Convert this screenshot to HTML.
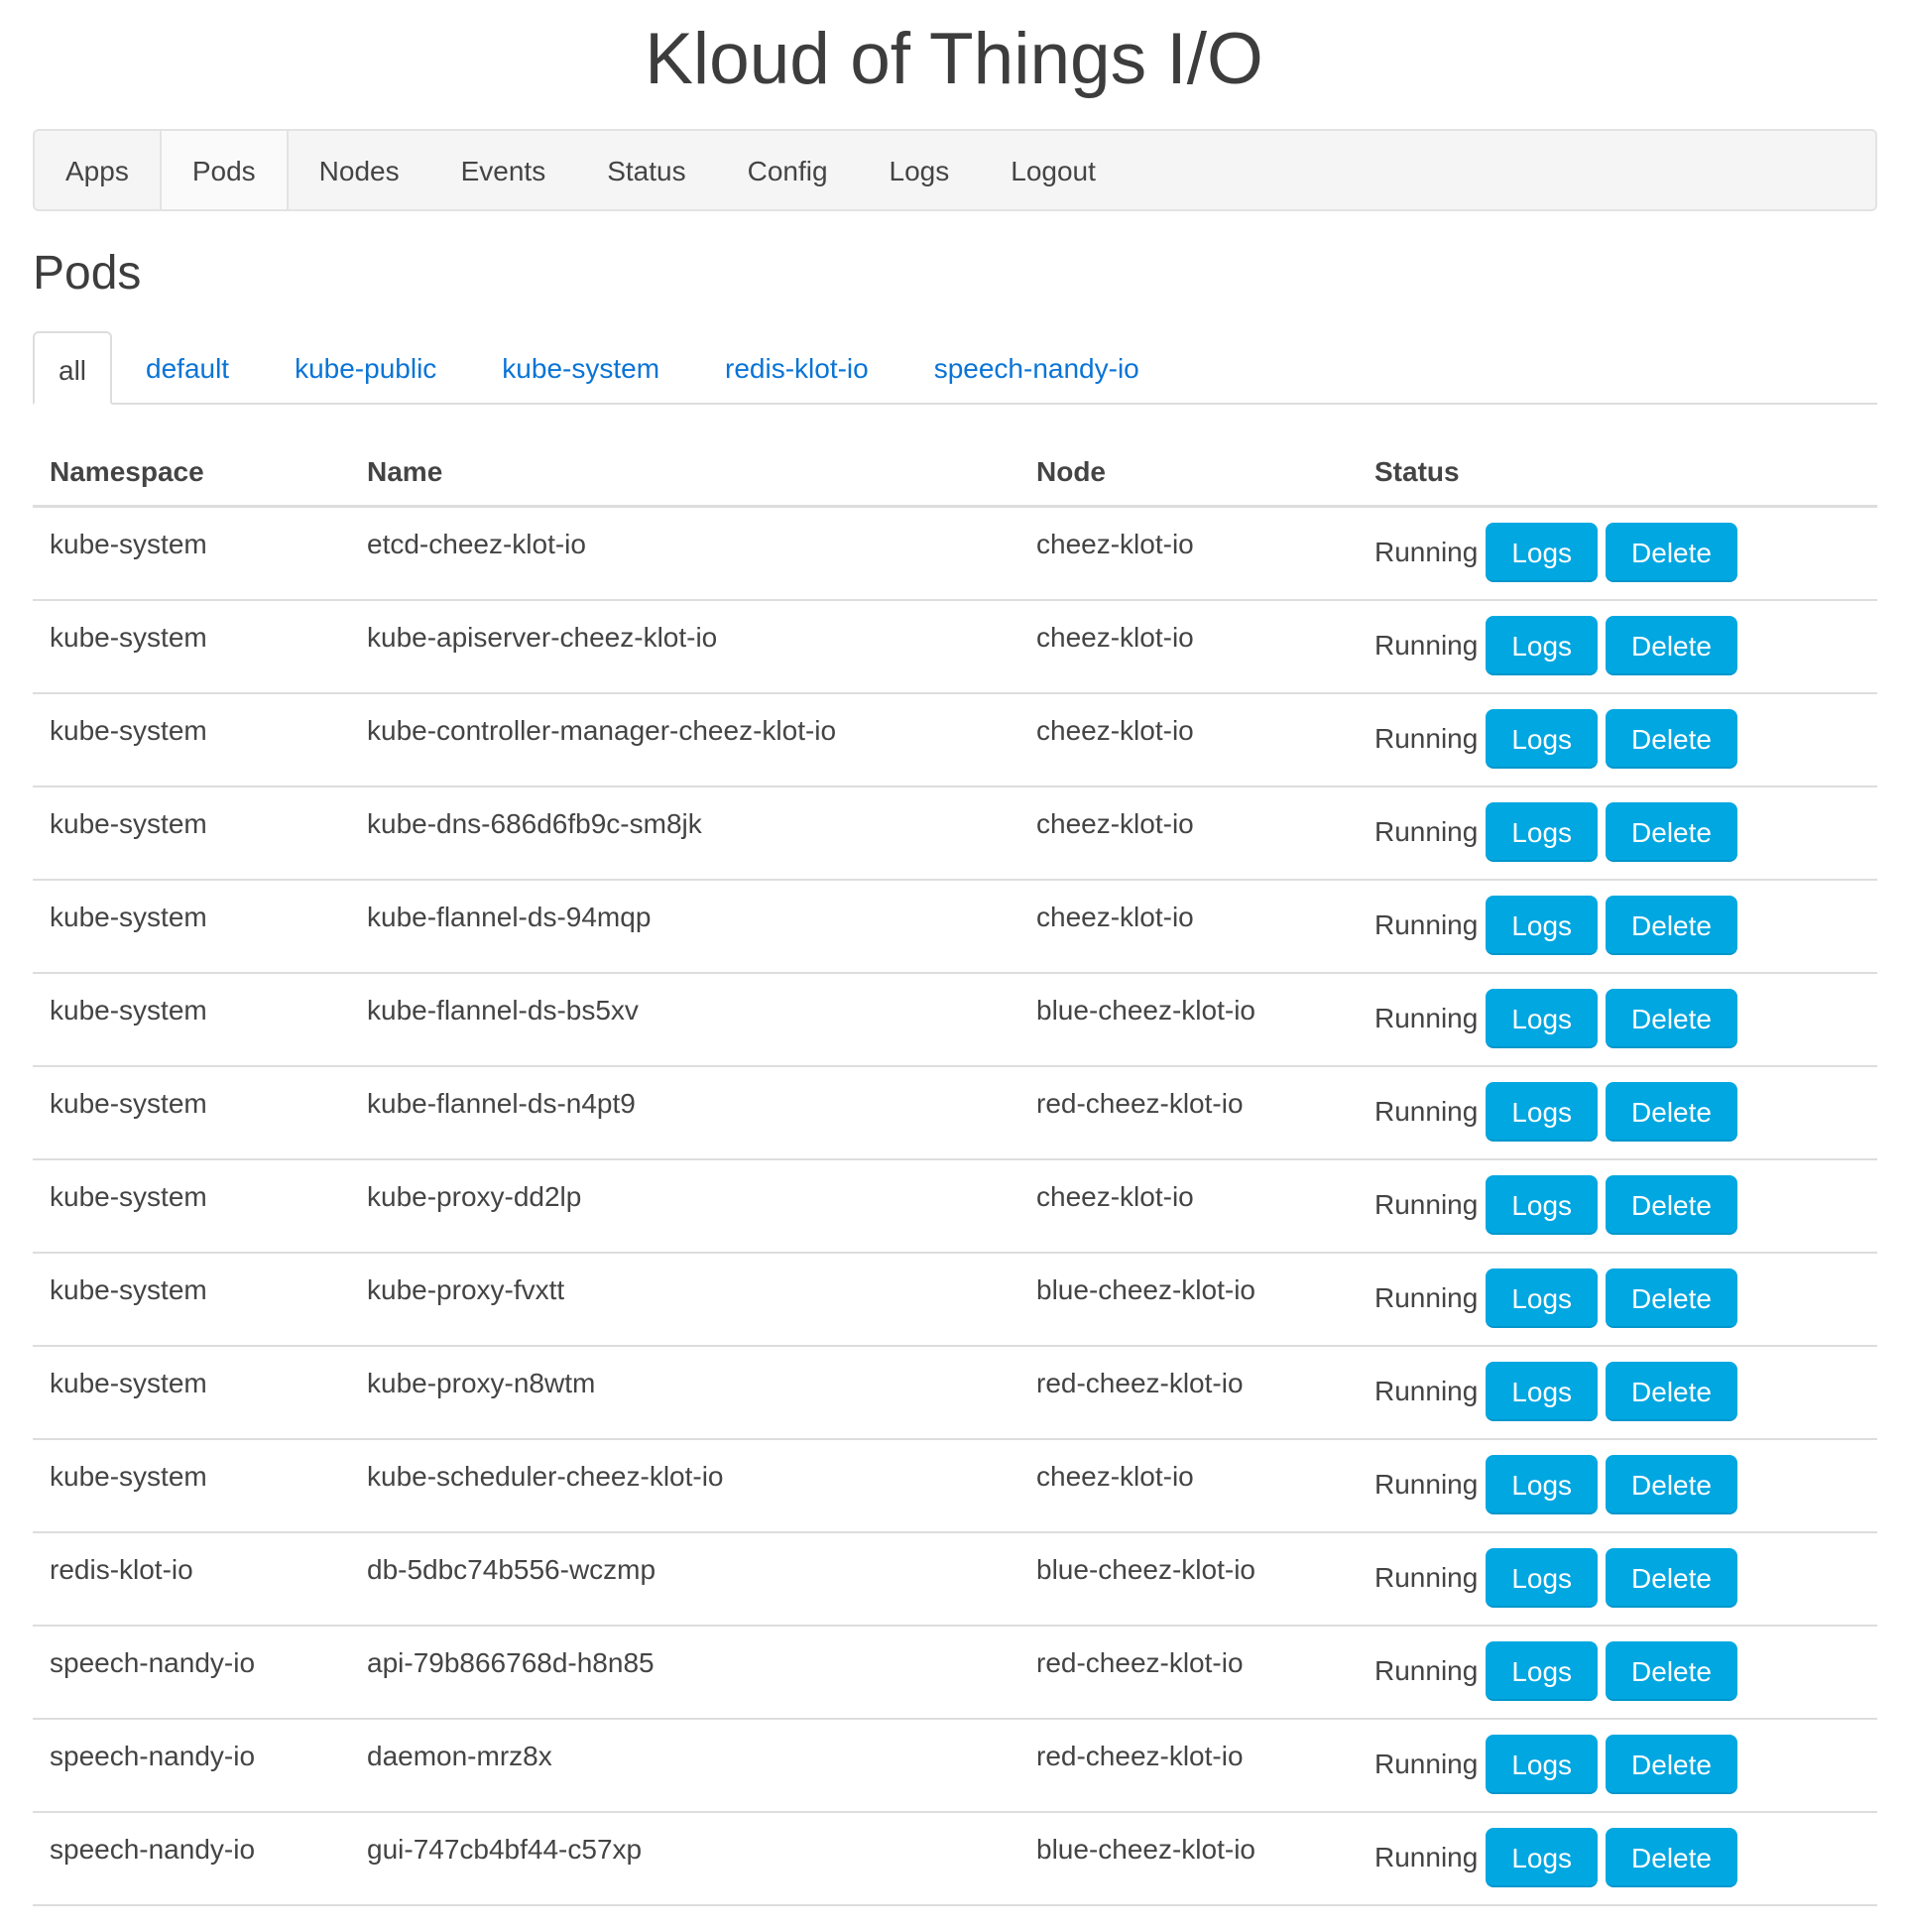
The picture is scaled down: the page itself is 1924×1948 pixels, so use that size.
<!DOCTYPE html>
<html><head><meta charset="utf-8"><style>
*{box-sizing:border-box;margin:0;padding:0}
body{width:1924px;height:1948px;background:#fff;font-family:"Liberation Sans",Helvetica,Arial,sans-serif;color:#444;font-size:28px;position:relative;overflow:hidden}
h1{position:absolute;left:0;width:1924px;top:15px;text-align:center;font-weight:normal;font-size:73px;line-height:90px;color:#3d3d3d}
.nav{position:absolute;left:33px;top:130px;width:1860px;height:83px;background:#f5f5f5;border:2px solid #e3e3e3;border-radius:6px;display:flex}
.nav div{height:79px;line-height:82px;padding:0 31px;color:#444}
.nav .act{background:#fafafa;border-left:2px solid #e3e3e3;border-right:2px solid #e3e3e3}
h3{position:absolute;left:33px;top:246px;font-size:48px;font-weight:normal;line-height:60px;color:#3d3d3d}
.tabs{position:absolute;left:33px;top:334px;width:1860px;height:74px;border-bottom:2px solid #ddd;display:flex}
.tabs div{height:74px;line-height:76px;padding:0 32px;color:#0a74d6;margin-right:2px}
.tabs .act{color:#444;background:#fff;border:2px solid #ddd;border-bottom:2px solid #fff;border-radius:6px 6px 0 0;padding:0 24px;height:74px}
.tbl{position:absolute;left:33px;top:442px;width:1860px}
.row{position:relative;height:94px;border-bottom:2px solid #ddd}
.hd{height:70px;border-bottom:3px solid #ddd;font-weight:bold}
.c{position:absolute;top:17px;line-height:40px}
.hd .c{top:14px}
.c1{left:17px}.c2{left:337px}.c3{left:1012px}.c4{left:1353px}
.st{position:absolute;left:1353px;top:15px;height:60px;display:flex;align-items:center}
.btn{background:#00a7e1;color:#fff;height:60px;line-height:62px;padding:0 26px;border-radius:8px;margin-left:8px;border-bottom:2px solid #0096cc}
</style></head><body>
<h1>Kloud of Things I/O</h1>
<div class="nav"><div>Apps</div><div class="act">Pods</div><div>Nodes</div><div>Events</div><div>Status</div><div>Config</div><div>Logs</div><div>Logout</div></div>
<h3>Pods</h3>
<div class="tabs"><div class="act">all</div><div>default</div><div>kube-public</div><div>kube-system</div><div>redis-klot-io</div><div>speech-nandy-io</div></div>
<div class="tbl">
<div class="row hd"><div class="c c1">Namespace</div><div class="c c2">Name</div><div class="c c3">Node</div><div class="c c4">Status</div></div>
<div class="row"><div class="c c1">kube-system</div><div class="c c2">etcd-cheez-klot-io</div><div class="c c3">cheez-klot-io</div><div class="st">Running<span class="btn">Logs</span><span class="btn">Delete</span></div></div>
<div class="row"><div class="c c1">kube-system</div><div class="c c2">kube-apiserver-cheez-klot-io</div><div class="c c3">cheez-klot-io</div><div class="st">Running<span class="btn">Logs</span><span class="btn">Delete</span></div></div>
<div class="row"><div class="c c1">kube-system</div><div class="c c2">kube-controller-manager-cheez-klot-io</div><div class="c c3">cheez-klot-io</div><div class="st">Running<span class="btn">Logs</span><span class="btn">Delete</span></div></div>
<div class="row"><div class="c c1">kube-system</div><div class="c c2">kube-dns-686d6fb9c-sm8jk</div><div class="c c3">cheez-klot-io</div><div class="st">Running<span class="btn">Logs</span><span class="btn">Delete</span></div></div>
<div class="row"><div class="c c1">kube-system</div><div class="c c2">kube-flannel-ds-94mqp</div><div class="c c3">cheez-klot-io</div><div class="st">Running<span class="btn">Logs</span><span class="btn">Delete</span></div></div>
<div class="row"><div class="c c1">kube-system</div><div class="c c2">kube-flannel-ds-bs5xv</div><div class="c c3">blue-cheez-klot-io</div><div class="st">Running<span class="btn">Logs</span><span class="btn">Delete</span></div></div>
<div class="row"><div class="c c1">kube-system</div><div class="c c2">kube-flannel-ds-n4pt9</div><div class="c c3">red-cheez-klot-io</div><div class="st">Running<span class="btn">Logs</span><span class="btn">Delete</span></div></div>
<div class="row"><div class="c c1">kube-system</div><div class="c c2">kube-proxy-dd2lp</div><div class="c c3">cheez-klot-io</div><div class="st">Running<span class="btn">Logs</span><span class="btn">Delete</span></div></div>
<div class="row"><div class="c c1">kube-system</div><div class="c c2">kube-proxy-fvxtt</div><div class="c c3">blue-cheez-klot-io</div><div class="st">Running<span class="btn">Logs</span><span class="btn">Delete</span></div></div>
<div class="row"><div class="c c1">kube-system</div><div class="c c2">kube-proxy-n8wtm</div><div class="c c3">red-cheez-klot-io</div><div class="st">Running<span class="btn">Logs</span><span class="btn">Delete</span></div></div>
<div class="row"><div class="c c1">kube-system</div><div class="c c2">kube-scheduler-cheez-klot-io</div><div class="c c3">cheez-klot-io</div><div class="st">Running<span class="btn">Logs</span><span class="btn">Delete</span></div></div>
<div class="row"><div class="c c1">redis-klot-io</div><div class="c c2">db-5dbc74b556-wczmp</div><div class="c c3">blue-cheez-klot-io</div><div class="st">Running<span class="btn">Logs</span><span class="btn">Delete</span></div></div>
<div class="row"><div class="c c1">speech-nandy-io</div><div class="c c2">api-79b866768d-h8n85</div><div class="c c3">red-cheez-klot-io</div><div class="st">Running<span class="btn">Logs</span><span class="btn">Delete</span></div></div>
<div class="row"><div class="c c1">speech-nandy-io</div><div class="c c2">daemon-mrz8x</div><div class="c c3">red-cheez-klot-io</div><div class="st">Running<span class="btn">Logs</span><span class="btn">Delete</span></div></div>
<div class="row"><div class="c c1">speech-nandy-io</div><div class="c c2">gui-747cb4bf44-c57xp</div><div class="c c3">blue-cheez-klot-io</div><div class="st">Running<span class="btn">Logs</span><span class="btn">Delete</span></div></div>
</div>
</body></html>
